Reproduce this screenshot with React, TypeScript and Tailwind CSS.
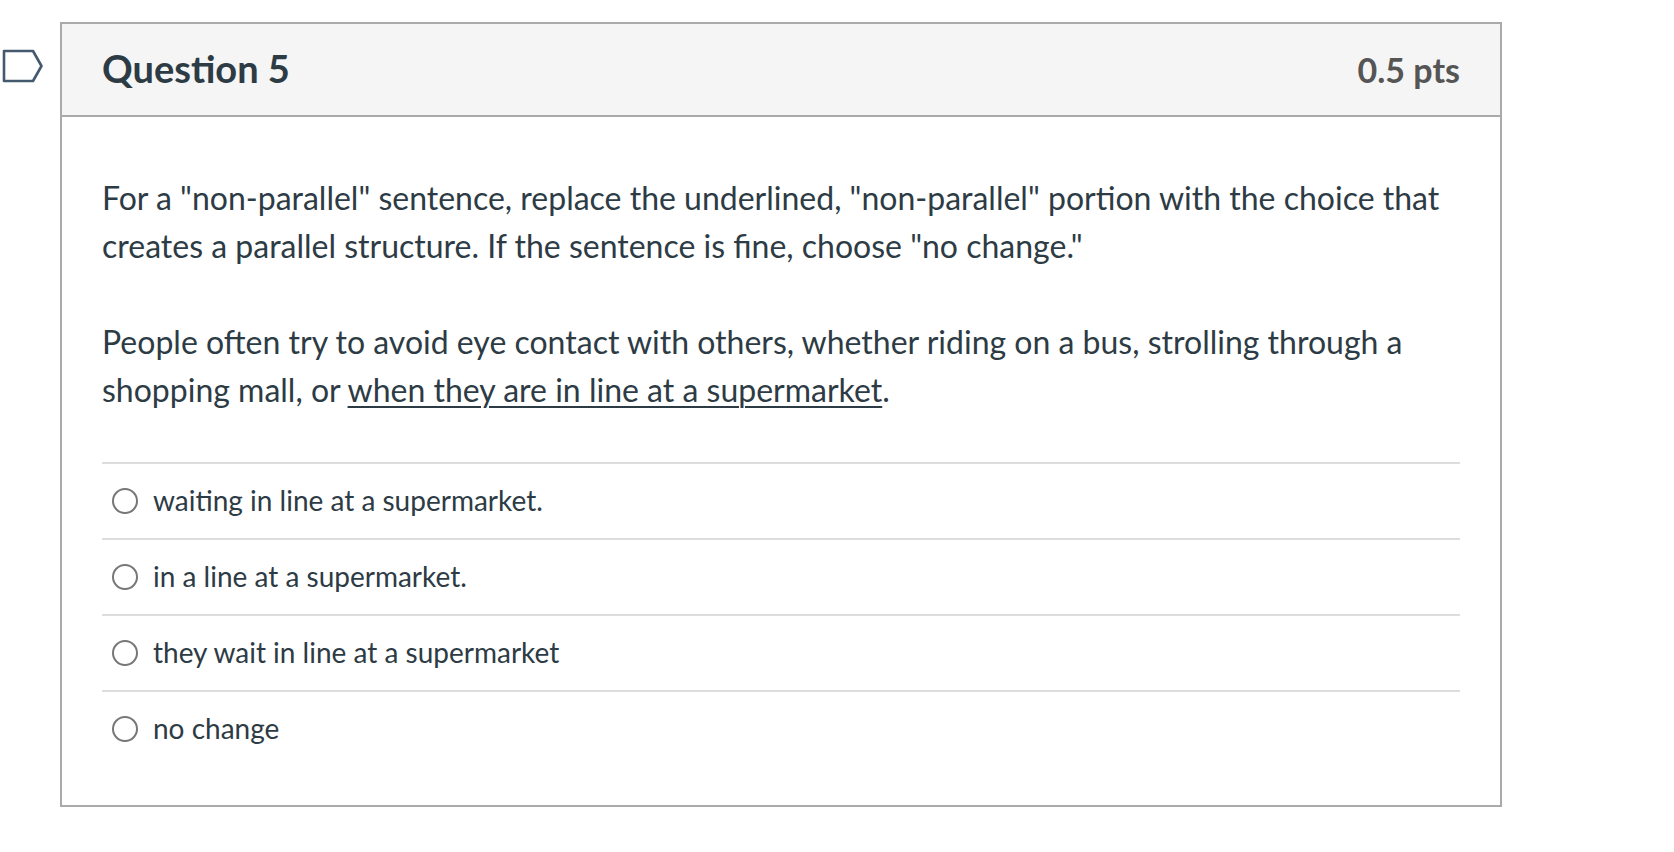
import React from 'react';

const answers = [
  'waiting in line at a supermarket.',
  'in a line at a supermarket.',
  'they wait in line at a supermarket',
  'no change',
];

function FlagIcon() {
  return (
    <svg width="42" height="34" viewBox="0 0 42 34" fill="none">
      <path
        d="M2 2 H31 L39.5 17 L31 32 H2 Z"
        stroke="#44596e"
        strokeWidth="2.6"
        strokeLinejoin="round"
      />
    </svg>
  );
}

export default function App() {
  return (
    <div className="min-h-screen bg-white font-['Lato',sans-serif] text-[#2d3b45]">
      <div className="flex pt-[22px]">
        {/* Flag column */}
        <div className="w-[60px] shrink-0 pt-[27px] pl-[2px]">
          <FlagIcon />
        </div>

        {/* Question card */}
        <div className="w-[1442px] border-2 border-[#aaaaaa]">
          <div className="h-[93px] bg-[#f5f5f5] border-b-2 border-[#aaaaaa] px-[40px] flex items-center justify-between">
            <h2 className="text-[38px] font-bold leading-none text-[#2d3b45] mb-[4px]">Question 5</h2>
            <span className="text-[34px] font-bold leading-none text-[#555555]">0.5 pts</span>
          </div>

          <div className="px-[40px] pt-[57px] pb-[39px]">
            <p className="text-[32px] leading-[48px]">
              For a "non-parallel" sentence, replace the underlined, "non-parallel" portion with the choice that creates a parallel structure. If the sentence is fine, choose "no change."
            </p>
            <p className="text-[32px] leading-[48px] mt-[48px]">
              People often try to avoid eye contact with others, whether riding on a bus, strolling through a shopping mall, or{' '}
              <span className="underline decoration-[2px] underline-offset-[4px]">when they are in line at a supermarket</span>.
            </p>

            <div className="mt-[48px]">
              {answers.map((a) => (
                <div key={a} className="h-[76px] border-t-2 border-[#dddddd] flex items-center">
                  <span className="ml-[10px] w-[26px] h-[26px] rounded-full border-2 border-[#777777] bg-white shrink-0" />
                  <span className="ml-[15px] text-[28px] leading-none mb-[2px]">{a}</span>
                </div>
              ))}
            </div>
          </div>
        </div>
      </div>
    </div>
  );
}
